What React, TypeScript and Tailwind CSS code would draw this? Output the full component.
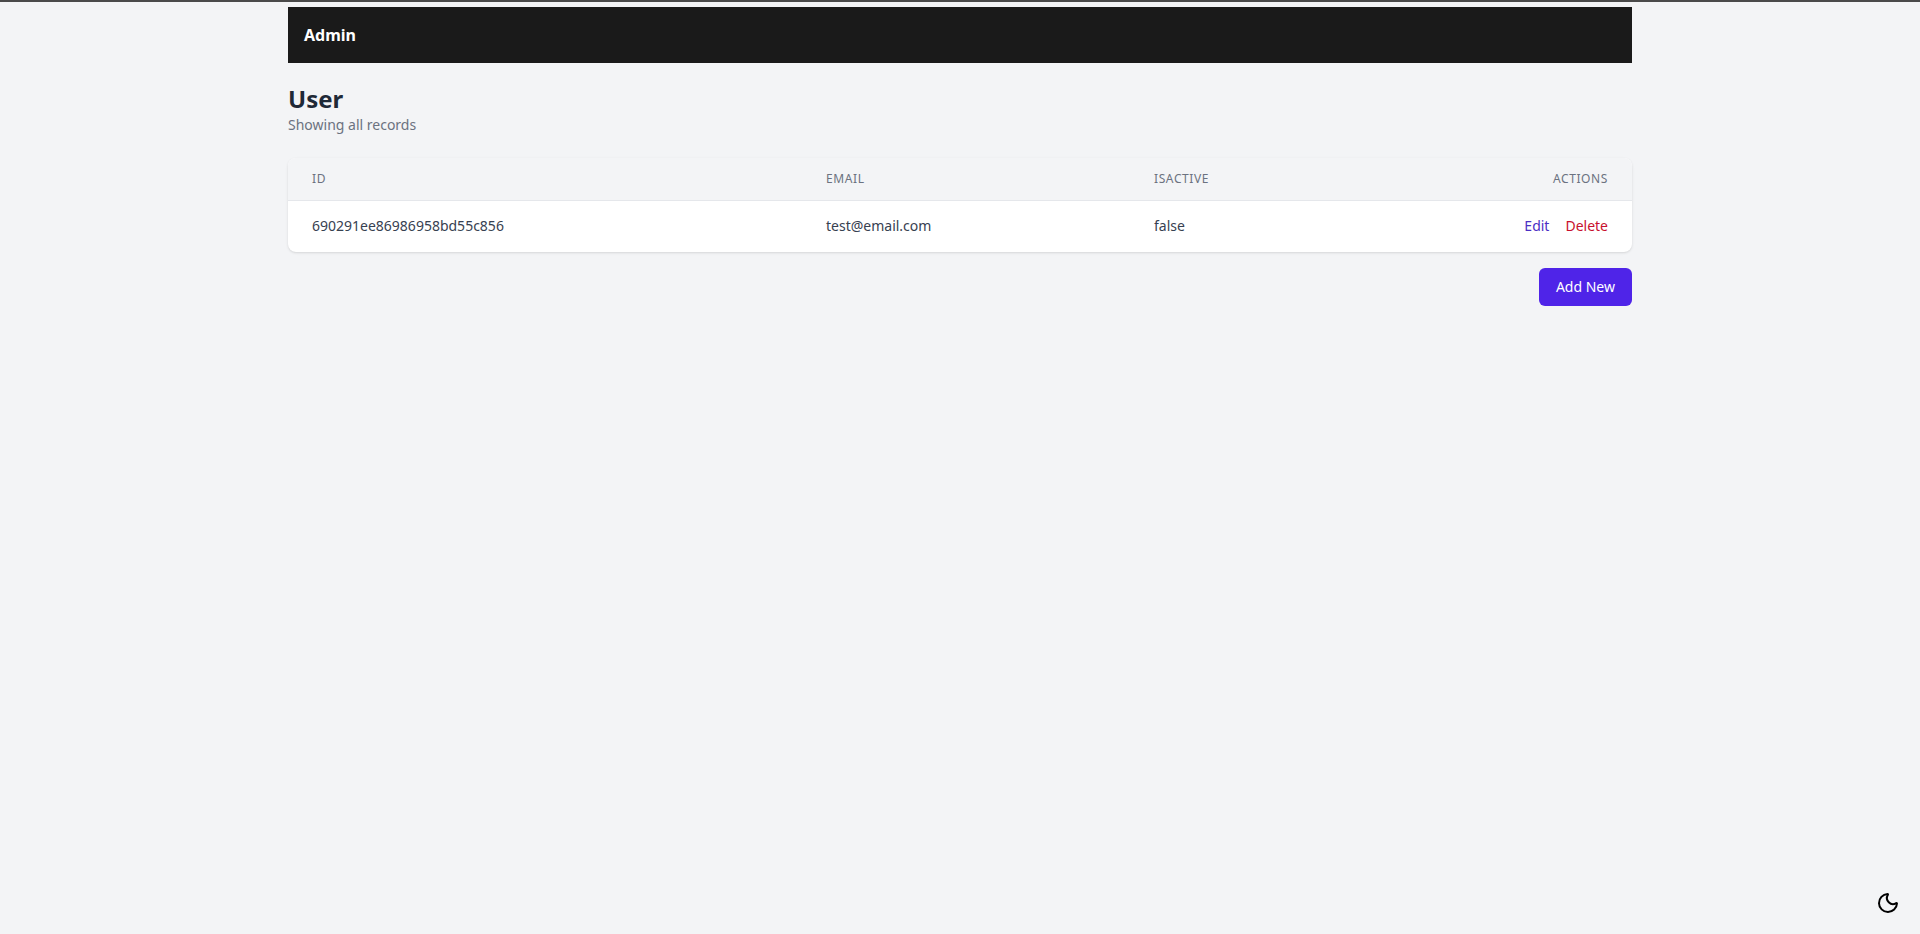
// App.tsx
// Admin user list: nav bar, heading, records table, add button, theme toggle.

import { Moon } from "lucide-react";

const users = [{ id: "690291ee86986958bd55c856", email: "test@email.com", isActive: "false" }];

export default function App() {
  return (
    <div className="relative min-h-[934px] border-t-2 border-[#4a4a4a] bg-[#f3f4f6] font-['Noto_Sans',sans-serif]">
      <div className="mx-auto w-[1344px] pt-[5px]">
        <nav className="flex h-14 items-center bg-[#1a1a1a] px-4">
          <span className="text-base font-bold text-white">Admin</span>
        </nav>

        <div className="mt-5">
          <h1 className="text-2xl leading-8 font-bold text-[#1f2937]">User</h1>
          <p className="text-sm leading-5 text-[#6b7280]">Showing all records</p>
        </div>

        <div className="mt-[23px] overflow-hidden rounded-lg bg-white shadow-sm">
          <table className="w-full table-fixed text-left">
            <colgroup>
              <col className="w-[514px]" />
              <col className="w-[328px]" />
              <col />
              <col />
            </colgroup>
            <thead className="border-b border-[#e5e7eb] bg-[#f3f4f6]">
              <tr className="text-xs tracking-wider text-[#6b7280] uppercase">
                <th className="h-[42px] px-6 font-normal">ID</th>
                <th className="px-6 font-normal">Email</th>
                <th className="px-6 font-normal">isActive</th>
                <th className="px-6 text-right font-normal">Actions</th>
              </tr>
            </thead>
            <tbody>
              {users.map((u) => (
                <tr key={u.id} className="text-sm text-[#374151]">
                  <td className="h-[52px] px-6">{u.id}</td>
                  <td className="px-6">{u.email}</td>
                  <td className="px-6">{u.isActive}</td>
                  <td className="px-6 text-right">
                    <a className="text-[#4b2fc4]">Edit</a>
                    <a className="ml-4 text-[#c8102e]">Delete</a>
                  </td>
                </tr>
              ))}
            </tbody>
          </table>
        </div>

        <div className="mt-4 flex justify-end">
          <button className="h-[38px] rounded-md bg-[#4f24e8] px-[17px] text-sm text-white">Add New</button>
        </div>
      </div>

      <button className="absolute right-5 bottom-[19px] text-black">
        <Moon className="h-6 w-6" strokeWidth={2} />
      </button>
    </div>
  );
}
